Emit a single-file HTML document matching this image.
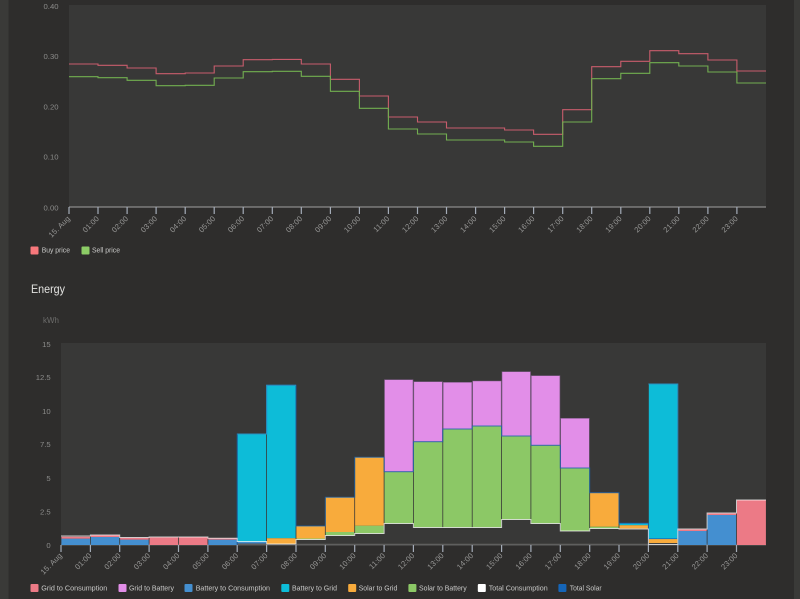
<!DOCTYPE html>
<html>
<head>
<meta charset="utf-8">
<title>Energy charts</title>
<style>
html,body{margin:0;padding:0;background:#2e2d2c;width:800px;height:599px;overflow:hidden}
svg{display:block;filter:blur(.3px)}
text{font-family:"Liberation Sans",sans-serif}
.y{font-size:7.7px;fill:#8b8b8a;text-anchor:end}
.x{font-size:7.6px;letter-spacing:.15px;fill:#979796;text-anchor:end}
.l{font-size:7.2px;fill:#c9c9c8}
</style>
</head>
<body>
<svg width="800" height="599" viewBox="0 0 800 599" xmlns="http://www.w3.org/2000/svg">
<rect width="800" height="599" fill="#2e2d2c"/>
<rect x="0" y="0" width="8.5" height="599" fill="#3a3a38"/>
<rect x="794" y="0" width="6" height="599" fill="#3a3a38"/>

<!-- Price chart -->
<rect x="69" y="5" width="697" height="202" fill="#383837"/>
<path d="M69 64H98V65.3H127.1V68H156.1V73.7H185.2V73H214.2V66H243.2V59.7H272.3V59.4H301.3V64H330.4V79.3H359.4V96H388.4V117H417.5V122H446.5V128H504.6V130H533.6V134.3H562.7V109.7H591.7V66.7H620.8V61.3H649.8V50.7H678.8V53.7H707.9V60H736.9V71H766" fill="none" stroke="#c85c6c" stroke-width="1.1"/>
<path d="M69 76.7H98V77.7H127.1V80.3H156.1V85.7H185.2V85.3H214.2V78H243.2V71.7H272.3V71.3H301.3V76.3H330.4V91.3H359.4V108.3H388.4V129H417.5V134H446.5V140H504.6V142H533.6V146.3H562.7V122H591.7V78.7H620.8V73.3H649.8V62.7H678.8V66H707.9V72H736.9V83H766" fill="none" stroke="#72ae50" stroke-width="1.1"/>
<path d="M69 207H766" stroke="#8a8a8a" stroke-width="1.3"/>
<path d="M69 207v7M98 207v7M127.1 207v7M156.1 207v7M185.2 207v7M214.2 207v7M243.2 207v7M272.3 207v7M301.3 207v7M330.4 207v7M359.4 207v7M388.4 207v7M417.5 207v7M446.5 207v7M475.6 207v7M504.6 207v7M533.6 207v7M562.7 207v7M591.7 207v7M620.8 207v7M649.8 207v7M678.8 207v7M707.9 207v7M736.9 207v7" stroke="#a4acb8" stroke-width="1.2"/>

<text class="y" x="58.5" y="9">0.40</text>
<text class="y" x="58.5" y="59">0.30</text>
<text class="y" x="58.5" y="109.5">0.20</text>
<text class="y" x="58.5" y="159.5">0.10</text>
<text class="y" x="58.5" y="210.5">0.00</text>

<text class="x" transform="translate(70.6 219) rotate(-45)">15. Aug</text>
<text class="x" transform="translate(99.6 219) rotate(-45)">01:00</text>
<text class="x" transform="translate(128.7 219) rotate(-45)">02:00</text>
<text class="x" transform="translate(157.7 219) rotate(-45)">03:00</text>
<text class="x" transform="translate(186.8 219) rotate(-45)">04:00</text>
<text class="x" transform="translate(215.8 219) rotate(-45)">05:00</text>
<text class="x" transform="translate(244.8 219) rotate(-45)">06:00</text>
<text class="x" transform="translate(273.9 219) rotate(-45)">07:00</text>
<text class="x" transform="translate(302.9 219) rotate(-45)">08:00</text>
<text class="x" transform="translate(332 219) rotate(-45)">09:00</text>
<text class="x" transform="translate(361 219) rotate(-45)">10:00</text>
<text class="x" transform="translate(390 219) rotate(-45)">11:00</text>
<text class="x" transform="translate(419.1 219) rotate(-45)">12:00</text>
<text class="x" transform="translate(448.1 219) rotate(-45)">13:00</text>
<text class="x" transform="translate(477.2 219) rotate(-45)">14:00</text>
<text class="x" transform="translate(506.2 219) rotate(-45)">15:00</text>
<text class="x" transform="translate(535.2 219) rotate(-45)">16:00</text>
<text class="x" transform="translate(564.3 219) rotate(-45)">17:00</text>
<text class="x" transform="translate(593.3 219) rotate(-45)">18:00</text>
<text class="x" transform="translate(622.4 219) rotate(-45)">19:00</text>
<text class="x" transform="translate(651.4 219) rotate(-45)">20:00</text>
<text class="x" transform="translate(680.4 219) rotate(-45)">21:00</text>
<text class="x" transform="translate(709.5 219) rotate(-45)">22:00</text>
<text class="x" transform="translate(738.5 219) rotate(-45)">23:00</text>

<rect x="30.5" y="246.5" width="8" height="8" rx="1" fill="#f8787c"/>
<text class="l" x="41.7" y="252.7" textLength="28.3" lengthAdjust="spacingAndGlyphs">Buy price</text>
<rect x="81.5" y="246.5" width="8" height="8" rx="1" fill="#8ccc66"/>
<text class="l" x="92" y="252.7" textLength="28" lengthAdjust="spacingAndGlyphs">Sell price</text>

<!-- Energy chart -->
<text x="31" y="293" font-size="11.5" fill="#e2e2e0" textLength="34" lengthAdjust="spacingAndGlyphs">Energy</text>
<text x="59" y="323" font-size="8" fill="#6c6c6b" text-anchor="end">kWh</text>

<rect x="61" y="343" width="705" height="202" fill="#383837"/>
<path d="M61 544.6H766" stroke="#5f5f5e" stroke-width="1.8"/>

<!-- rose -->
<path fill="#ec7a86" d="M61.4 536.7H90V538.7H61.4ZM90.8 535H119.3V537H90.8ZM120.1 537.7H148.7V539.7H120.1ZM149.5 537.3H178.1V545H149.5ZM178.9 537H207.5V545H178.9ZM208.3 538.3H236.8V539.7H208.3ZM678.2 529.3H706.7V531H678.2ZM707.5 513.3H736.1V515H707.5ZM736.9 500H765.9V545H736.9Z"/>
<!-- blue -->
<path fill="#448fd0" d="M61.4 538.7H90V545H61.4ZM90.8 537H119.3V545H90.8ZM120.1 539.7H148.7V545H120.1ZM208.3 539.7H236.8V545H208.3ZM237.6 541.7H266.2V543.5H237.6ZM678.2 531H706.7V545H678.2ZM707.5 515H736.1V545H707.5Z"/>
<!-- cyan -->
<path fill="#0dbcd8" d="M237.6 434H266.2V541.7H237.6ZM267 385.3H295.6V538.3H267ZM619.4 523.3H648V525.3H619.4ZM648.8 384H677.4V539H648.8Z"/>
<!-- orange -->
<path fill="#f8ab3c" d="M267 538.3H295.6V544H267ZM296.4 526H324.9V538.5H296.4ZM325.7 497.3H354.3V532H325.7ZM355.1 457.3H383.7V525.7H355.1ZM590.1 492.7H618.6V526.7H590.1ZM619.4 525.3H648V528.5H619.4ZM648.8 539H677.4V543H648.8Z"/>
<!-- green -->
<path fill="#8cc866" d="M296.4 538.5H324.9V539.5H296.4ZM325.7 532H354.3V535.5H325.7ZM355.1 525.7H383.7V533.5H355.1ZM384.5 471.7H413V523.5H384.5ZM413.8 441.7H442.4V527.5H413.8ZM443.2 429H471.8V527.5H443.2ZM472.6 426H501.2V527.5H472.6ZM502 436H530.5V519.5H502ZM531.3 445.3H559.9V523.5H531.3ZM560.7 468H589.3V531H560.7ZM590.1 526.7H618.6V528.5H590.1Z"/>
<!-- pink -->
<path fill="#e28ee8" stroke="#7c5a84" stroke-width=".6" d="M384.5 379.7H413V471.7H384.5ZM413.8 381.7H442.4V441.7H413.8ZM443.2 382.3H471.8V429H443.2ZM472.6 381H501.2V426H472.6ZM502 371.7H530.5V436H502ZM531.3 375.7H559.9V445.3H531.3ZM560.7 418.3H589.3V468H560.7Z"/>

<!-- total solar line -->
<path fill="none" stroke="#1565b8" stroke-width="1" stroke-opacity=".75" d="M237.2 545V434H266.6V385.3H296V526H325.3V497.3H354.7V457.3H384.1V471.7H413.4V441.7H442.8V429H472.2V426H501.6V436H530.9V445.3H560.3V468H589.7V492.7H619V523.3H648.4V538.6H677.8"/>
<path fill="none" stroke="#2a8fc0" stroke-width="1" d="M237.2 434H266.6V385.3H296M648.4 384H677.8V539"/>
<!-- total consumption line -->
<path fill="none" stroke="#ffffff" stroke-width="1" stroke-opacity=".72" d="M61 536H90.4V535H119.7V537.5H149.1V537H178.5V537H207.9V538.3H237.2V541.5H266.6V544H296V539.5H325.3V535.5H354.7V533.5H384.1V523.5H413.4V527.5H442.8V527.5H501.6V519.5H530.9V523.5H560.3V531H589.7V528.5H619V529H648.4V544.5H677.8V529H707.1V513H736.5V500H766"/>

<path d="M61 545v7M90.4 545v7M119.7 545v7M149.1 545v7M178.5 545v7M207.9 545v7M237.2 545v7M266.6 545v7M296 545v7M325.3 545v7M354.7 545v7M384.1 545v7M413.4 545v7M442.8 545v7M472.2 545v7M501.6 545v7M530.9 545v7M560.3 545v7M589.7 545v7M619 545v7M648.4 545v7M677.8 545v7M707.1 545v7M736.5 545v7" stroke="#a4acb8" stroke-width="1.2"/>

<text class="y" x="50.7" y="347">15</text>
<text class="y" x="50.7" y="380">12.5</text>
<text class="y" x="50.7" y="414">10</text>
<text class="y" x="50.7" y="447">7.5</text>
<text class="y" x="50.7" y="481">5</text>
<text class="y" x="50.7" y="514.5">2.5</text>
<text class="y" x="50.7" y="548">0</text>

<text class="x" transform="translate(62.6 556) rotate(-45)">15. Aug</text>
<text class="x" transform="translate(92 556) rotate(-45)">01:00</text>
<text class="x" transform="translate(121.3 556) rotate(-45)">02:00</text>
<text class="x" transform="translate(150.7 556) rotate(-45)">03:00</text>
<text class="x" transform="translate(180.1 556) rotate(-45)">04:00</text>
<text class="x" transform="translate(209.5 556) rotate(-45)">05:00</text>
<text class="x" transform="translate(238.8 556) rotate(-45)">06:00</text>
<text class="x" transform="translate(268.2 556) rotate(-45)">07:00</text>
<text class="x" transform="translate(297.6 556) rotate(-45)">08:00</text>
<text class="x" transform="translate(326.9 556) rotate(-45)">09:00</text>
<text class="x" transform="translate(356.3 556) rotate(-45)">10:00</text>
<text class="x" transform="translate(385.7 556) rotate(-45)">11:00</text>
<text class="x" transform="translate(415 556) rotate(-45)">12:00</text>
<text class="x" transform="translate(444.4 556) rotate(-45)">13:00</text>
<text class="x" transform="translate(473.8 556) rotate(-45)">14:00</text>
<text class="x" transform="translate(503.2 556) rotate(-45)">15:00</text>
<text class="x" transform="translate(532.5 556) rotate(-45)">16:00</text>
<text class="x" transform="translate(561.9 556) rotate(-45)">17:00</text>
<text class="x" transform="translate(591.3 556) rotate(-45)">18:00</text>
<text class="x" transform="translate(620.6 556) rotate(-45)">19:00</text>
<text class="x" transform="translate(650 556) rotate(-45)">20:00</text>
<text class="x" transform="translate(679.4 556) rotate(-45)">21:00</text>
<text class="x" transform="translate(708.7 556) rotate(-45)">22:00</text>
<text class="x" transform="translate(738.1 556) rotate(-45)">23:00</text>

<rect x="30.5" y="584" width="8" height="8" rx="1" fill="#ec7a86"/>
<text class="l" x="41.3" y="590.4" textLength="66" lengthAdjust="spacingAndGlyphs">Grid to Consumption</text>
<rect x="118.5" y="584" width="8" height="8" rx="1" fill="#e28ee8"/>
<text class="l" x="129" y="590.4" textLength="45" lengthAdjust="spacingAndGlyphs">Grid to Battery</text>
<rect x="184.5" y="584" width="8" height="8" rx="1" fill="#448fd0"/>
<text class="l" x="195.7" y="590.4" textLength="74.3" lengthAdjust="spacingAndGlyphs">Battery to Consumption</text>
<rect x="281.3" y="584" width="8" height="8" rx="1" fill="#0dbcd8"/>
<text class="l" x="292" y="590.4" textLength="45" lengthAdjust="spacingAndGlyphs">Battery to Grid</text>
<rect x="348.2" y="584" width="8" height="8" rx="1" fill="#f8ab3c"/>
<text class="l" x="358.7" y="590.4" textLength="38.6" lengthAdjust="spacingAndGlyphs">Solar to Grid</text>
<rect x="408.4" y="584" width="8" height="8" rx="1" fill="#8cc866"/>
<text class="l" x="419" y="590.4" textLength="47.7" lengthAdjust="spacingAndGlyphs">Solar to Battery</text>
<rect x="477.8" y="584" width="8" height="8" rx="1" fill="#ffffff"/>
<text class="l" x="488.7" y="590.4" textLength="59" lengthAdjust="spacingAndGlyphs">Total Consumption</text>
<rect x="558.4" y="584" width="8" height="8" rx="1" fill="#1565b8"/>
<text class="l" x="569.7" y="590.4" textLength="32" lengthAdjust="spacingAndGlyphs">Total Solar</text>
</svg>
</body>
</html>
